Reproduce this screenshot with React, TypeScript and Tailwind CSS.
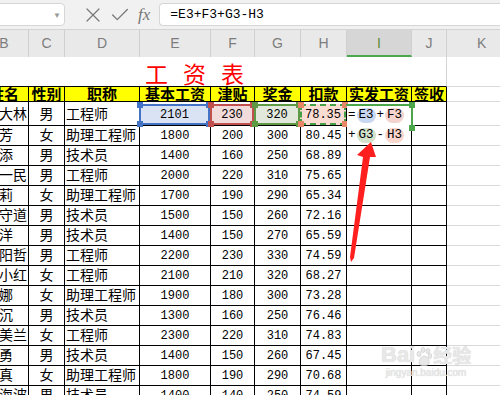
import { X, Check } from "lucide-react";

// 表格数据（B 列的姓氏在屏幕左侧被截掉）
const HEAD = ["姓名", "性别", "职称", "基本工资", "津贴", "奖金", "扣款", "实发工资", "签收"];
const ROWS: string[][] = [
  ["王芳", "女", "助理工程师", "1800", "200", "300", "80.45"],
  ["李添", "男", "技术员", "1400", "160", "250", "68.89"],
  ["赵一民", "男", "工程师", "2000", "220", "310", "75.65"],
  ["刘莉", "女", "助理工程师", "1700", "190", "290", "65.34"],
  ["陈守道", "男", "技术员", "1500", "150", "260", "72.16"],
  ["杨洋", "男", "技术员", "1400", "150", "270", "65.59"],
  ["欧阳哲", "男", "工程师", "2200", "230", "330", "74.59"],
  ["李小红", "女", "工程师", "2100", "210", "320", "68.27"],
  ["孙娜", "女", "助理工程师", "1900", "180", "300", "73.28"],
  ["周沉", "男", "技术员", "1300", "160", "250", "76.46"],
  ["吴美兰", "女", "工程师", "2300", "220", "310", "74.83"],
  ["郑勇", "男", "技术员", "1400", "150", "260", "67.45"],
  ["冯真", "女", "助理工程师", "1800", "190", "290", "70.68"],
  ["何海波", "男", "技术员", "1400", "140", "250", "74.59"],
];
const LETTERS = ["B", "C", "D", "E", "F", "G", "H", "I", "J", "K"];

const GRID =
  "-ml-[20px] grid w-[537px] grid-cols-[49px_36px_75px_71px_44px_46px_46px_65px_35px_70px]";
const CELL = "flex items-center overflow-visible border-b border-r border-black";
const CORNERS = [
  "-left-[4px] -top-[4px]",
  "-right-[4px] -top-[4px]",
  "-left-[4px] -bottom-[4px]",
  "-right-[4px] -bottom-[4px]",
];

function RefBox({ text, box, handle }: { text: string; box: string; handle: string }) {
  return (
    <div className={`absolute -left-[1px] right-0 top-[2px] bottom-0 flex items-center justify-center border-2 ${box}`}>
      {text}
      {CORNERS.map((c) => (
        <span key={c} className={`absolute h-[6px] w-[6px] ${c} ${handle}`} />
      ))}
    </div>
  );
}

function Pill({ children, bg }: { children: string; bg: string }) {
  return <span className={`rounded-full px-[2px] leading-[15px] ${bg}`}>{children}</span>;
}

function DataRow({ row }: { row: string[] }) {
  return (
    <>
      <div className={`${CELL} h-[20px] pl-[5px] text-[14px]`}>{row[0]}</div>
      <div className={`${CELL} h-[20px] justify-center text-[14px]`}>{row[1]}</div>
      <div className={`${CELL} h-[20px] pl-[1px] text-[14px]`}>{row[2]}</div>
      {row.slice(3).map((v, i) => (
        <div key={i} className={`${CELL} h-[20px] justify-center pt-[1px] text-[12px]`}>{v}</div>
      ))}
      <div className={`${CELL} h-[20px]`} />
      <div className={`${CELL} h-[20px]`} />
      <div className="h-[20px] border-b border-[#d9d9d9]" />
    </>
  );
}

export default function App() {
  return (
    <div className="relative h-[395px] w-[500px] overflow-hidden bg-white text-black">
      {/* 编辑栏 */}
      <div className="flex h-[30px] items-center border-b border-[#d4d4d4] bg-[#f1f1f1]">
        <div className="-ml-[6px] flex h-[23px] w-[71px] items-center justify-end rounded-[4px] border border-[#d6d6d6] bg-white pr-[3px]">
          <span className="text-[8px] text-[#9a9a9a]">▼</span>
        </div>
        <X className="ml-[16px] text-[#777]" size={24} strokeWidth={1.2} />
        <Check className="ml-[4px] text-[#777]" size={22} strokeWidth={1.4} />
        <span className="ml-[7px] font-['Liberation_Serif',serif] text-[17px] italic text-[#777]">fx</span>
        <div className="ml-[9px] flex h-[23px] flex-1 items-center rounded-l-[4px] border border-r-0 border-[#d6d6d6] bg-white pl-[10px] font-['Liberation_Mono',monospace] text-[13px]">
          =E3+F3+G3-H3
        </div>
      </div>

      {/* 列标 */}
      <div className={`${GRID} h-[27px] bg-[#e9e9e9] font-['Liberation_Sans',sans-serif] text-[14px] text-[#7d7d7d]`}>
        {LETTERS.map((l) =>
          l === "I" ? (
            <div key={l} className="flex items-center justify-center border-b-2 border-r border-b-[#4ca64c] border-r-[#d0d0d0] bg-[#d6d6d6] pt-[2px] text-[#5c8a3a]">
              {l}
            </div>
          ) : (
            <div key={l} className={`flex items-center border-r border-[#d0d0d0] ${l === "K" ? "pl-[30px]" : "justify-center"}`}>
              {l}
            </div>
          )
        )}
      </div>

      {/* 表格 */}
      <div className={`${GRID} font-['Liberation_Mono','Noto_Sans_CJK_SC',monospace] leading-[16px]`}>
        {/* 标题行 */}
        <div className="col-span-9 flex h-[30px] items-end gap-[15px] border-b border-r border-b-black border-r-[#d4d4d4] pb-[2px] pl-[165px] font-['Noto_Sans_CJK_SC',sans-serif] text-[23px] leading-[22px] text-[#ff0000]">
          <span>工</span>
          <span>资</span>
          <span>表</span>
        </div>
        <div className="h-[30px] border-b border-[#d9d9d9]" />

        {/* 表头 */}
        {HEAD.map((h, i) => (
          <div
            key={h}
            className={`${CELL} h-[15px] bg-[#ffff00] font-['Noto_Sans_CJK_SC',sans-serif] text-[15px] font-bold leading-[14px] ${i === 0 ? "justify-end pr-[9px]" : "justify-center"}`}
          >
            {h}
          </div>
        ))}
        <div className="h-[15px] border-b border-[#d9d9d9]" />

        {/* 第 3 行：正在编辑 I3 */}
        <div className={`${CELL} h-[24px] pl-[5px] pt-[2px] text-[14px]`}>张大林</div>
        <div className={`${CELL} h-[24px] justify-center pt-[2px] text-[14px]`}>男</div>
        <div className={`${CELL} h-[24px] pl-[1px] pt-[2px] text-[14px]`}>工程师</div>
        <div className={`${CELL} relative h-[24px] text-[12px]`}>
          <RefBox text="2101" box="border-[#4472c4] bg-[#dae3f3]" handle="bg-[#4472c4]" />
        </div>
        <div className={`${CELL} relative h-[24px] text-[12px]`}>
          <RefBox text="230" box="border-[#c0504d] bg-[#f2dcdb]" handle="bg-[#c0504d]" />
        </div>
        <div className={`${CELL} relative h-[24px] text-[12px]`}>
          <RefBox text="320" box="border-[#5e9a44] bg-[#e2e9dc]" handle="bg-[#5e9a44]" />
        </div>
        <div className={`${CELL} relative h-[24px] text-[12px]`}>
          <RefBox text="78.35" box="border-dashed border-[#45a045] bg-[#fbdcd3]" handle="bg-[#e8866a]" />
        </div>
        <div className={`${CELL} relative h-[24px]`}>
          <div className="absolute left-0 top-[2px] z-10 flex h-[41px] w-[64px] flex-col bg-white pl-[1px] pt-[1px] text-[12.5px]">
            <div className="flex h-[20px] items-center gap-[1px]">
              = <Pill bg="bg-[#c9d8f2]">E3</Pill>+<Pill bg="bg-[#f4d3cf]">F3</Pill>
            </div>
            <div className="flex h-[20px] items-center gap-[1px]">
              + <Pill bg="bg-[#d3e2cb]">G3</Pill>-<Pill bg="bg-[#fad6cc]">H3</Pill>
            </div>
          </div>
          <div className="absolute -left-[1px] top-[2px] z-10 h-[23px] w-[67px] border-r-2 border-t-2 border-[#4ca64c]">
            <span className="absolute -right-[4px] -top-[4px] h-[6px] w-[6px] bg-[#4ca64c]" />
            <span className="absolute -bottom-[4px] -right-[4px] h-[6px] w-[6px] bg-[#4ca64c]" />
          </div>
        </div>
        <div className={`${CELL} h-[24px]`} />
        <div className="h-[24px] border-b border-[#d9d9d9]" />

        {ROWS.map((r) => (
          <DataRow key={r[0]} row={r} />
        ))}
      </div>

      {/* 红色箭头 */}
      <svg className="pointer-events-none absolute left-0 top-0 z-20" width={500} height={395} viewBox="0 0 500 395">
        <polygon points="371,142 376,157 370,157 354,258 351,262 350,257 363,157 357,155" fill="#ff1f1f" />
      </svg>

      {/* 水印 */}
      <div className="pointer-events-none absolute left-[381px] top-[343px] z-20 flex flex-col items-center text-[#e8e8e8] [text-shadow:0_0_1px_#c8c8c8]">
        <div className="flex items-end font-['Liberation_Sans',sans-serif] text-[22px] font-bold leading-[24px]">
          Bai
          <svg width="16" height="20" viewBox="0 0 16 20" className="mx-[1px]">
            <g fill="#e8e8e8" stroke="#c8c8c8" strokeWidth="0.6">
              <ellipse cx="3" cy="7" rx="2" ry="2.6" />
              <ellipse cx="7" cy="3" rx="2" ry="2.6" />
              <ellipse cx="12" cy="4" rx="2" ry="2.6" />
              <ellipse cx="14" cy="9" rx="1.8" ry="2.4" />
              <path d="M3 17 C3 11 6 9 8 9 C11 9 14 12 13 17 C12 19 4 19 3 17 Z" />
            </g>
          </svg>
          <span className="font-['Noto_Sans_CJK_SC',sans-serif] text-[19px]">经验</span>
        </div>
        <div className="font-['Liberation_Sans',sans-serif] text-[10px] leading-[12px]">jingyan.baidu.com</div>
      </div>
    </div>
  );
}
